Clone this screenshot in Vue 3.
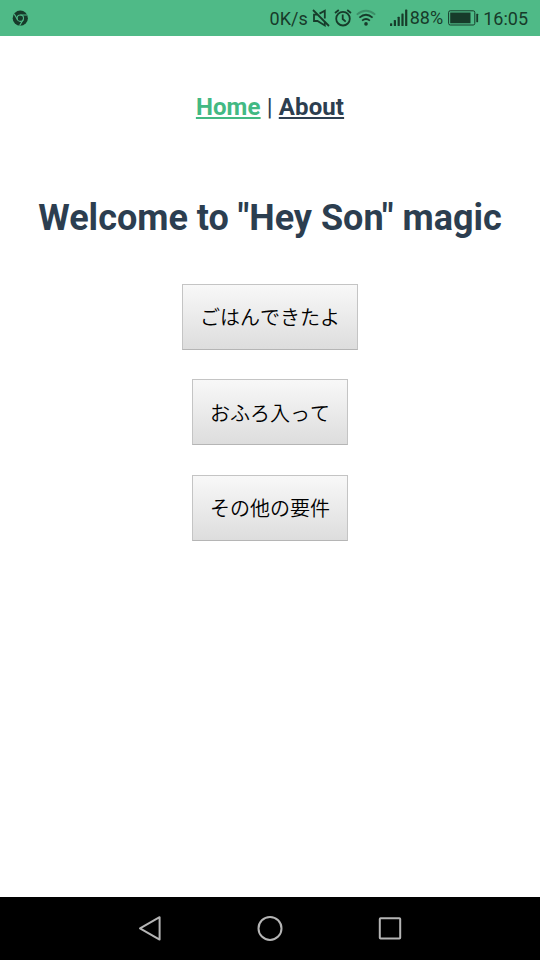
<script setup>
const messages = ['ごはんできたよ', 'おふろ入って', 'その他の要件']
</script>

<template>
  <div class="screen">
    <header class="status">
      <svg class="chrome" width="16" height="16" viewBox="0 0 16 16">
        <circle cx="8.3" cy="8.2" r="7.6" fill="#173b2a" />
        <g fill="none" stroke="#4fba87" stroke-width="1.1">
          <circle cx="8.3" cy="8.2" r="3.2" />
          <path d="M8.3 5H15M5.6 9.8L2.3 4.1M11.1 9.8L7.6 15.6" />
        </g>
      </svg>
      <div class="indicators">
        <span class="speed">0K/s</span>
        <svg class="mute" width="18" height="18" viewBox="0 0 18 18" fill="none" stroke="#173b2a" stroke-width="1.8">
          <path d="M1 1L17 17" />
          <path d="M5 5.7H2V12H5.5L12.8 16.4V12.8M7.5 4.6L12.8 1.7V9.5" />
        </svg>
        <svg class="alarm" width="18" height="18" viewBox="0 0 18 18" fill="none" stroke="#173b2a" stroke-width="1.8">
          <circle cx="9" cy="9.7" r="6.8" />
          <path d="M8.7 5.4V10L11.7 12.7M1 4L4.8 1M13.2 1L17 4" />
        </svg>
        <svg class="wifi" width="20" height="18" viewBox="0 0 20 18" fill="none" stroke="#173b2a" stroke-width="1.8">
          <path d="M.8 5.6Q10 -2.2 19.2 5.6" opacity=".35" />
          <path d="M3.4 8.6Q10 2.8 16.6 8.6M6.1 11.6Q10 8.4 13.9 11.6" />
          <circle cx="10" cy="14.9" r="1.8" fill="#173b2a" stroke="none" />
        </svg>
        <svg class="signal" width="18" height="18" viewBox="0 0 18 18" fill="#173b2a">
          <rect x="0" y="14.2" width="2.2" height="2.8" rx=".6" />
          <rect x="3.8" y="11" width="2.2" height="6" rx=".6" />
          <rect x="7.6" y="7.7" width="2.2" height="9.3" rx=".6" />
          <rect x="11.4" y="4.5" width="2.2" height="12.5" rx=".6" />
          <rect x="15.1" y=".6" width="2.2" height="16.4" rx=".6" />
        </svg>
        <span class="percent">88%</span>
        <svg class="battery" width="31" height="16" viewBox="0 0 31 16">
          <rect x=".6" y=".8" width="26.2" height="14.2" rx="1.6" fill="none" stroke="#173b2a" stroke-width="1" />
          <rect x="2.2" y="2.5" width="20.3" height="10.8" fill="#173b2a" />
          <rect x="28.3" y="3.8" width="1.8" height="8.4" rx=".4" fill="#173b2a" />
        </svg>
        <span class="clock">16:05</span>
      </div>
    </header>

    <main class="page">
      <nav class="links">
        <a class="active">Home</a> | <a>About</a>
      </nav>
      <h1>Welcome to "Hey Son" magic</h1>
      <div class="actions">
        <button v-for="message in messages" :key="message">{{ message }}</button>
      </div>
    </main>

    <footer class="navbar">
      <svg width="28" height="28" viewBox="0 0 28 28"><path d="M4 13.4L23.6 2.2V24.6Z" /></svg>
      <svg width="28" height="28" viewBox="0 0 28 28"><circle cx="14" cy="13.4" r="11.5" /></svg>
      <svg width="28" height="28" viewBox="0 0 28 28"><rect x="3.8" y="3.2" width="20.4" height="20.4" rx=".8" /></svg>
    </footer>
  </div>
</template>

<style>
body {
  margin: 0;
}
</style>

<style scoped>
.screen {
  display: flex;
  flex-direction: column;
  width: 540px;
  height: 960px;
  overflow: hidden;
  background: #fff;
  color: #2c3e50;
  font-family: Roboto, "Noto Sans CJK JP", sans-serif;
}
.status {
  display: flex;
  flex: none;
  box-sizing: border-box;
  height: 36px;
  padding: 0 12px;
  align-items: center;
  justify-content: space-between;
  background: #4fba87;
  color: #173b2a;
  font-size: 18px;
  line-height: 22px;
}
.indicators {
  display: flex;
  align-items: center;
}
svg {
  display: block;
  flex: none;
}
.speed,
.clock {
  padding-top: 2px;
}
.mute {
  margin-left: 4px;
}
.alarm {
  margin-left: 4px;
}
.wifi {
  margin-left: 4px;
}
.signal {
  margin-left: 14px;
}
.percent {
  margin-left: 2px;
}
.battery {
  margin: 0 4px 0 5px;
}
.page {
  display: flex;
  flex: 1;
  flex-direction: column;
  align-items: center;
}
.links {
  margin-top: 57px;
  font-size: 24px;
  line-height: 28px;
  letter-spacing: 0.12px;
}
.links a {
  color: #2c3e50;
  font-weight: 700;
  text-decoration: underline;
}
.links .active {
  color: #42b983;
}
h1 {
  margin: 76px 0 0;
  font-size: 36px;
  line-height: 42px;
  white-space: nowrap;
}
.actions {
  display: flex;
  flex-direction: column;
  align-items: center;
  margin-top: 45px;
  gap: 29.5px;
}
button {
  box-sizing: border-box;
  height: 66px;
  padding: 0 17px;
  border: 1px solid #c4c4c4;
  border-bottom-color: #b5b5b5;
  border-radius: 0;
  background: linear-gradient(#f8f8f8, #ddd);
  color: #000;
  font-family: "Noto Sans CJK JP", sans-serif;
  font-size: 20px;
  font-weight: 350;
  font-kerning: none;
  line-height: 30px;
}
button:nth-child(2) {
  margin: -0.5px 0 0.5px;
  padding-top: 2px;
}
.navbar {
  display: flex;
  flex: none;
  height: 63px;
  align-items: center;
  justify-content: center;
  gap: 92px;
  background: #000;
}
.navbar svg {
  fill: none;
  stroke: #b5b5b5;
  stroke-width: 2;
  stroke-linejoin: round;
}
</style>
